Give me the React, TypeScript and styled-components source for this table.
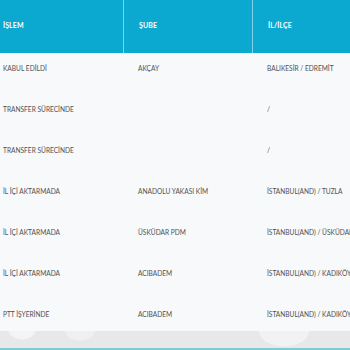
import React from "react";
import styled, { createGlobalStyle } from "styled-components";

const Global = createGlobalStyle`
  html, body { margin: 0; padding: 0; background: #f8f9fb; overflow: hidden; }
  body { font-family: Lato, "Open Sans", sans-serif; }
`;

const Page = styled.div`
  width: 350px;
  height: 350px;
  display: flex;
  flex-direction: column;
  overflow: hidden;
  background: #f8f9fb;
`;

const TableArea = styled.div`
  flex: 1;
  min-height: 0;
  overflow: hidden;
`;

const Table = styled.div`
  width: 420px;
  display: grid;
  grid-template-columns: 123px 129px 168px;
`;

const HeadCell = styled.div<{ $first?: boolean }>`
  height: 53px;
  box-sizing: border-box;
  background: #0ba8cf;
  color: #ffffff;
  font-size: 7px;
  font-weight: 700;
  padding: 21px 0 0 ${(p) => (p.$first ? "3px" : "15px")};
  border-left: ${(p) => (p.$first ? "none" : "1px solid #7fd3e8")};
  letter-spacing: 0.1px;
`;

const Cell = styled.div<{ $first?: boolean }>`
  height: 41px;
  box-sizing: border-box;
  color: #505050;
  font-size: 6.6px;
  padding: 11px 0 0 ${(p) => (p.$first ? "3px" : "15px")};
  white-space: nowrap;
  overflow: hidden;
`;

const Footer = styled.div`
  height: 17px;
  flex: none;
  background:
    radial-gradient(ellipse 26px 16px at 284px 0px, #f2f2f3 92%, transparent 100%),
    radial-gradient(ellipse 14px 9px at 22px 0px, #f4f4f5 85%, transparent 100%),
    radial-gradient(ellipse 16px 10px at 80px 0px, #f0f0f1 85%, transparent 100%),
    #e8e8e9;
  border-bottom: 2px solid #7fc9d9;
`;

const rows: [string, string, string][] = [
  ["KABUL EDİLDİ", "AKÇAY", "BALIKESİR / EDREMİT"],
  ["TRANSFER SÜRECİNDE", "", "/"],
  ["TRANSFER SÜRECİNDE", "", "/"],
  ["İL İÇİ AKTARMADA", "ANADOLU YAKASI KİM", "İSTANBUL(AND) / TUZLA"],
  ["İL İÇİ AKTARMADA", "ÜSKÜDAR PDM", "İSTANBUL(AND) / ÜSKÜDAR"],
  ["İL İÇİ AKTARMADA", "ACIBADEM", "İSTANBUL(AND) / KADIKÖY"],
  ["PTT İŞYERİNDE", "ACIBADEM", "İSTANBUL(AND) / KADIKÖY"],
];

export default function App() {
  return (
    <>
      <Global />
      <Page>
        <TableArea>
          <Table>
            <HeadCell $first>İŞLEM</HeadCell>
            <HeadCell>ŞUBE</HeadCell>
            <HeadCell>İL/İLÇE</HeadCell>
            {rows.map((r, i) => (
              <React.Fragment key={i}>
                <Cell $first>{r[0]}</Cell>
                <Cell>{r[1]}</Cell>
                <Cell>{r[2]}</Cell>
              </React.Fragment>
            ))}
          </Table>
        </TableArea>
        <Footer />
      </Page>
    </>
  );
}
